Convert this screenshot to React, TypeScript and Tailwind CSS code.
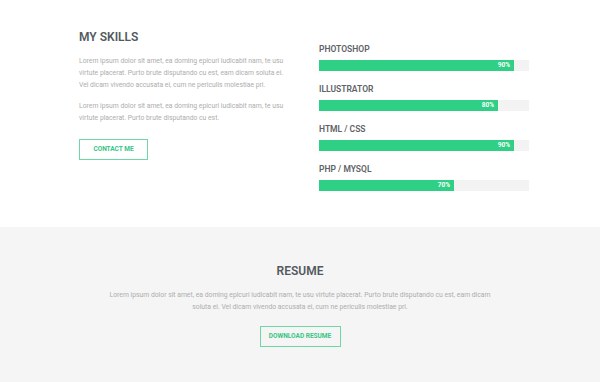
import React from 'react';

const skills = [
  { name: 'PHOTOSHOP', label: '90%', width: 195 },
  { name: 'ILLUSTRATOR', label: '80%', width: 179 },
  { name: 'HTML / CSS', label: '90%', width: 195 },
  { name: 'PHP / MYSQL', label: '70%', width: 135 },
];

export default function App() {
  return (
    <div className="w-[600px] h-[382px] overflow-hidden bg-white font-['Roboto',sans-serif]">
      {/* skills */}
      <section className="h-[227px] flex pl-[79px] pt-[29px]">
        <div className="w-[212px]">
          <h2 className="text-[12px] leading-[16px] font-semibold text-[#535a5e]">MY SKILLS</h2>
          <div className="mt-[10px] text-[6.8px] leading-[12px] text-[#adadad]">
            <p>
              Lorem ipsum dolor sit amet, ea doming epicuri iudicabit nam, te usu virtute placerat. Purto brute disputando cu est, eam dicam soluta ei. Vel dicam vivendo accusata ei, cum ne periculis molestiae pri.
            </p>
            <p className="mt-[9px]">
              Lorem ipsum dolor sit amet, ea doming epicuri iudicabit nam, te usu virtute placerat. Purto brute disputando cu est.
            </p>
          </div>
          <button className="mt-[15px] w-[69px] h-[21px] border border-[#6fd6a6] text-[6.5px] font-bold text-[#35c583] flex items-center justify-center">
            CONTACT ME
          </button>
        </div>
        <div className="ml-[28px] w-[210px] pt-[15px] flex flex-col gap-[13px]">
          {skills.map((s) => (
            <div key={s.name}>
              <div className="text-[8.5px] leading-[10px] font-semibold text-[#606366]">{s.name}</div>
              <div className="mt-[6px] h-[11px] bg-[#f3f3f3]">
                <div
                  className="h-full bg-[#2fcf85] flex items-center justify-end pr-[4px] text-[6.5px] font-bold text-white"
                  style={{ width: s.width }}
                >
                  {s.label}
                </div>
              </div>
            </div>
          ))}
        </div>
      </section>

      {/* resume */}
      <section className="h-[155px] bg-[#f5f5f5] flex flex-col items-center pt-[36px]">
        <h2 className="text-[12px] leading-[16px] font-semibold text-[#535a5e]">RESUME</h2>
        <p className="mt-[10px] w-[392px] text-center text-[6.8px] leading-[12px] text-[#adadad]">
          Lorem ipsum dolor sit amet, ea doming epicuri iudicabit nam, te usu virtute placerat. Purto brute disputando cu est, eam dicam soluta ei. Vel dicam vivendo accusata ei, cum ne periculis molestiae pri.
        </p>
        <button className="mt-[13px] w-[81px] h-[21px] border border-[#6fd6a6] text-[6.5px] font-bold text-[#35c583] flex items-center justify-center">
          DOWNLOAD RESUME
        </button>
      </section>
    </div>
  );
}
